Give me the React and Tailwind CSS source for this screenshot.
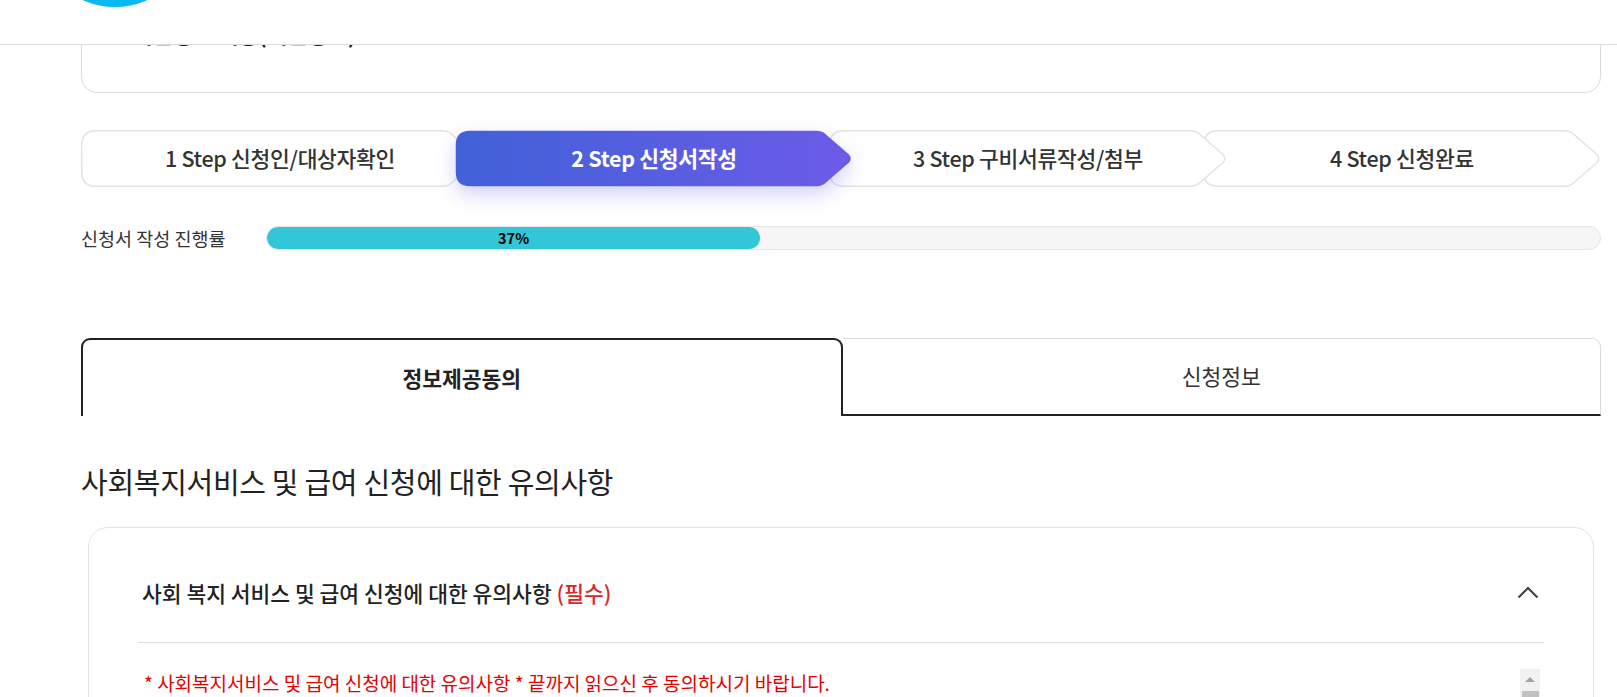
import React from "react";

const steps = [
  { label: "1 Step 신청인/대상자확인", z: "z-10" },
  { label: "2 Step 신청서작성", z: "z-30", active: true },
  { label: "3 Step 구비서류작성/첨부", z: "z-20" },
  { label: "4 Step 신청완료", z: "z-10" },
];

// chevron shape used behind each step label
const StepShape = ({ active }) => (
  <svg
    className={`absolute inset-0 ${active ? "drop-shadow-[0_8px_10px_rgba(95,90,230,0.28)]" : ""}`}
    width="398"
    height="57"
    viewBox="0 0 398 57"
  >
    <defs>
      <linearGradient id="stepGrad" x1="0" y1="0" x2="1" y2="0">
        <stop offset="0" stopColor="#4161d8" />
        <stop offset="1" stopColor="#6c5be8" />
      </linearGradient>
    </defs>
    <path
      d="M15 0.75 L362 0.75 Q367 0.75 371 4.5 L394 24.5 Q397.5 28.5 394 32.5 L371 52.5 Q367 56.25 362 56.25 L15 56.25 Q0.75 56.25 0.75 42 L0.75 15 Q0.75 0.75 15 0.75 Z"
      fill={active ? "url(#stepGrad)" : "#ffffff"}
      stroke={active ? "none" : "#e3e3e3"}
      strokeWidth="1.5"
    />
  </svg>
);

const StepBar = () => (
  <div className="flex h-[57px] mt-[37px]">
    {steps.map((s, i) => (
      <div
        key={s.label}
        className={`relative w-[398px] h-[57px] shrink-0 ${s.z} ${i > 0 ? "-ml-[24px]" : ""}`}
      >
        <StepShape active={s.active} />
        <span
          className={`relative flex h-full items-center justify-center tracking-[-0.3px] text-[21.5px] ${
            s.active ? "text-white font-bold" : "text-[#333] font-medium"
          }`}
        >
          {s.label}
        </span>
      </div>
    ))}
  </div>
);

export default function App() {
  return (
    <div className="relative min-h-screen bg-white font-['Noto_Sans_CJK_KR','Noto_Sans',sans-serif] text-[#222] overflow-hidden">
      {/* fixed header over scrolled page */}
      <header className="absolute top-0 left-0 right-0 h-[45px] bg-white border-b border-[#dcdcdc] z-50">
        <svg className="absolute left-0 top-0" width="200" height="10" viewBox="0 0 200 10">
          <circle cx="115" cy="-72" r="79" fill="#0bb9f2" />
        </svg>
      </header>

      <div className="w-[1601px] pl-[81px]">
        {/* card partly hidden behind header */}
        <div className="h-[93px] border border-[#dcdcdc] rounded-2xl pt-[21px] pl-[50px]">
          <p className="text-[22px] font-bold leading-none text-[#222]">개인정보 제공(개인정보)</p>
        </div>

        <StepBar />

        {/* progress */}
        <div className="flex items-center mt-[39px]">
          <span className="w-[185px] text-[18.5px] text-[#333] leading-none">신청서 작성 진행률</span>
          <div className="flex-1 h-[24px] rounded-full bg-[#f6f6f6] border border-[#e6e6e6] overflow-hidden">
            <div
              className="h-full rounded-full bg-[#33c6d7] flex items-center justify-center text-[14.5px] font-bold text-black"
              style={{ width: "37%" }}
            >
              37%
            </div>
          </div>
        </div>

        {/* tabs */}
        <div className="flex mt-[88px] h-[78px]">
          <div className="flex-1 flex items-center justify-center border-2 border-b-0 border-[#222] rounded-t-[9px] text-[21.5px] font-bold text-[#222]">
            정보제공동의
          </div>
          <div className="flex-1 flex items-center justify-center border-t border-r border-[#dcdcdc] border-b-2 border-b-[#222] rounded-tr-[9px] text-[21.5px] text-[#333]">
            신청정보
          </div>
        </div>

        <h2 className="mt-[47px] text-[29px] leading-[36px] tracking-[-0.3px] text-[#222]">
          사회복지서비스 및 급여 신청에 대한 유의사항
        </h2>

        {/* accordion */}
        <div className="mt-[28px] mx-[7px] border border-[#e2e2e2] rounded-[20px] pb-10">
          <div className="mx-[49px] flex items-center justify-between pt-[50px] pb-[34px] border-b border-[#e0e0e0]">
            <h3 className="pl-[4px] text-[21.5px] leading-[30px] font-medium text-[#222]">
              사회 복지 서비스 및 급여 신청에 대한 유의사항 <span className="text-[#d8262d]">(필수)</span>
            </h3>
            <svg className="mr-[5px] -mt-[2px]" width="22" height="13" viewBox="0 0 22 13" fill="none">
              <polyline points="1.5,11.5 11,2 20.5,11.5" stroke="#444" strokeWidth="2.2" />
            </svg>
          </div>

          <div className="mx-[49px] mt-[26px] flex h-[200px]">
            <div className="flex-1 pl-[6px] pt-[1px]">
              <p className="text-[19px] leading-[26px] text-[#e60000]">
                * 사회복지서비스 및 급여 신청에 대한 유의사항 * 끝까지 읽으신 후 동의하시기 바랍니다.
              </p>
            </div>
            <div className="w-[20px] mr-[4px] bg-[#f1f1f1] flex flex-col items-center">
              <div className="mt-[8px] w-0 h-0 border-l-[5px] border-r-[5px] border-b-[5px] border-l-transparent border-r-transparent border-b-[#a3a3a3]" />
              <div className="mt-[9px] w-[17px] h-[80px] bg-[#c1c1c1]" />
            </div>
          </div>
        </div>
      </div>
    </div>
  );
}
